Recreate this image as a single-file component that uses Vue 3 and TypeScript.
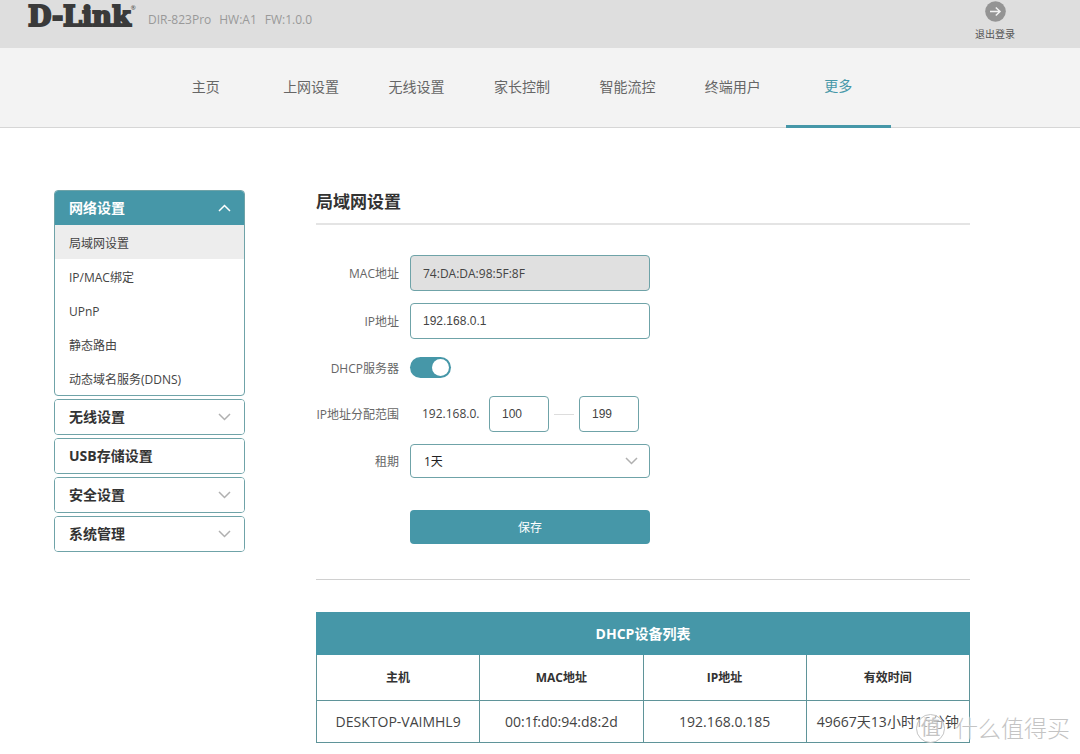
<script setup lang="ts">
import { ref } from 'vue'

interface MenuGroup {
  title: string
  arrow: boolean
}

interface Device {
  host: string
  mac: string
  ip: string
  lease: string
}

const tabs: string[] = ['主页', '上网设置', '无线设置', '家长控制', '智能流控', '终端用户', '更多']
const activeTab = ref('更多')

const subItems: string[] = ['局域网设置', 'IP/MAC绑定', 'UPnP', '静态路由', '动态域名服务(DDNS)']
const activeItem = ref('局域网设置')

const groups: MenuGroup[] = [
  { title: '无线设置', arrow: true },
  { title: 'USB存储设置', arrow: false },
  { title: '安全设置', arrow: true },
  { title: '系统管理', arrow: true },
]

const mac = ref('74:DA:DA:98:5F:8F')
const ip = ref('192.168.0.1')
const dhcp = ref(true)
const rangeStart = ref('100')
const rangeEnd = ref('199')
const lease = ref('1天')

const devices: Device[] = [
  { host: 'DESKTOP-VAIMHL9', mac: '00:1f:d0:94:d8:2d', ip: '192.168.0.185', lease: '49667天13小时15分钟' },
]
</script>

<template>
  <div class="page">
    <header class="topbar">
      <div class="brand">
        <span class="logo">D-Link</span><span class="reg">®</span>
      </div>
      <div class="info">
        <span>DIR-823Pro</span>
        <span>HW:A1</span>
        <span>FW:1.0.0</span>
      </div>
      <button class="logout" type="button">
        <svg width="21" height="21" viewBox="0 0 21 21" aria-hidden="true">
          <circle cx="10.500" cy="10.500" r="10.300" fill="#949494" />
          <path d="M5 10.500H15M10.800 6.500L15 10.500L10.800 14.500" fill="none" stroke="#f2f2f2" stroke-width="1.500" />
        </svg>
        <span>退出登录</span>
      </button>
    </header>

    <nav class="tabs">
      <a
        v-for="tab in tabs"
        :key="tab"
        href="#"
        :class="['tab', { active: tab === activeTab }]"
        @click.prevent="activeTab = tab"
      >{{ tab }}</a>
    </nav>

    <main class="main">
      <aside class="side">
        <section class="group">
          <button class="group-head open" type="button">
            <span>网络设置</span>
            <svg class="chevron" viewBox="0 0 13 8" aria-hidden="true"><path d="M1 7L6.500 1.500L12 7" /></svg>
          </button>
          <a
            v-for="item in subItems"
            :key="item"
            href="#"
            :class="['sub', { active: item === activeItem }]"
            @click.prevent="activeItem = item"
          >{{ item }}</a>
        </section>
        <section v-for="g in groups" :key="g.title" class="group">
          <button class="group-head" type="button">
            <span>{{ g.title }}</span>
            <svg v-if="g.arrow" class="chevron" viewBox="0 0 13 8" aria-hidden="true"><path d="M1 1L6.500 6.500L12 1" /></svg>
          </button>
        </section>
      </aside>

      <div class="content">
        <h1 class="title">局域网设置</h1>

        <form class="form" @submit.prevent>
          <div class="row">
            <label for="mac">MAC地址</label>
            <input id="mac" v-model="mac" class="field locked" type="text" readonly />
          </div>
          <div class="row">
            <label for="ip">IP地址</label>
            <input id="ip" v-model="ip" class="field" type="text" />
          </div>
          <div class="row toggle-row">
            <label for="dhcp">DHCP服务器</label>
            <input id="dhcp" v-model="dhcp" class="toggle" type="checkbox" />
          </div>
          <div class="row">
            <label for="start">IP地址分配范围</label>
            <div class="range">
              <span class="prefix">192.168.0.</span>
              <input id="start" v-model="rangeStart" class="field short" type="text" />
              <span class="dash"></span>
              <input v-model="rangeEnd" class="field short" type="text" aria-label="IP地址分配范围" />
            </div>
          </div>
          <div class="row">
            <label for="lease">租期</label>
            <div class="select">
              <select id="lease" v-model="lease">
                <option>1天</option>
              </select>
              <svg class="chevron" viewBox="0 0 13 8" aria-hidden="true"><path d="M1 1L6.500 6.500L12 1" /></svg>
            </div>
          </div>
          <div class="row save-row">
            <button class="save" type="submit">保存</button>
          </div>
        </form>

        <table class="devices">
          <thead>
            <tr class="caption">
              <th colspan="4">DHCP设备列表</th>
            </tr>
            <tr class="heads">
              <th>主机</th>
              <th>MAC地址</th>
              <th>IP地址</th>
              <th>有效时间</th>
            </tr>
          </thead>
          <tbody>
            <tr v-for="d in devices" :key="d.mac">
              <td>{{ d.host }}</td>
              <td>{{ d.mac }}</td>
              <td>{{ d.ip }}</td>
              <td>{{ d.lease }}</td>
            </tr>
          </tbody>
        </table>
      </div>
    </main>

    <div class="watermark">
      <span class="seal">值</span>
      <span>什么值得买</span>
    </div>
  </div>
</template>

<style>
body {
  background: #fff;
}
</style>

<style scoped>
.page {
  font-family: "Open Sans", "Noto Sans CJK SC", sans-serif;
  font-size: 12px;
  line-height: 18px;
  color: #444;
}

.page *,
.page *::before {
  box-sizing: border-box;
}

button,
input,
select {
  font: inherit;
  color: inherit;
  margin: 0;
}

a {
  color: inherit;
  text-decoration: none;
}

.topbar {
  display: flex;
  align-items: flex-start;
  height: 48px;
  padding: 0 65px 0 28px;
  background: #dedede;
}

.brand {
  display: flex;
  width: 120px;
  padding-top: 3px;
  color: #3a3a3a;
}

.logo {
  font-family: "DejaVu Serif", serif;
  font-size: 27px;
  font-weight: 700;
  line-height: 28px;
  -webkit-text-stroke: 2px #3a3a3a;
}

.reg {
  font-size: 6px;
  line-height: 10px;
}

.info {
  display: flex;
  flex: 1;
  gap: 8px;
  padding-top: 11px;
  color: #999;
}

.logout {
  display: flex;
  flex-direction: column;
  align-items: center;
  gap: 3px;
  padding: 1px 0 0;
  border: 0;
  background: none;
  font-size: 10px;
  color: #555;
}

.tabs {
  display: grid;
  grid-template-columns: repeat(7, 1fr);
  height: 80px;
  padding: 0 189px 0 153px;
  border-bottom: 1px solid #d6d6d6;
  background: #f3f3f3;
}

.tab {
  height: 80px;
  font-size: 14px;
  line-height: 78px;
  text-align: center;
  color: #666;
}

.tab.active {
  border-bottom: 3px solid #4697a8;
  line-height: 76px;
  color: #4697a8;
}

.main {
  display: grid;
  grid-template-columns: 191px 1fr;
  gap: 71px;
  padding: 62px 110px 11px 54px;
}

.side {
  display: flex;
  flex-direction: column;
  gap: 3px;
}

.group {
  overflow: hidden;
  border: 1px solid #6fa3a8;
  border-radius: 4px;
  background: #fff;
}

.group-head {
  display: flex;
  align-items: center;
  justify-content: space-between;
  width: 100%;
  height: 34px;
  padding: 0 13px 0 14px;
  border: 0;
  background: #fff;
  font-size: 14px;
  font-weight: 700;
  color: #333;
}

.group-head.open {
  background: #4697a8;
  color: #fff;
}

.chevron {
  width: 13px;
  height: 8px;
  fill: none;
  stroke: #b0b0b0;
  stroke-width: 1.500;
}

.open .chevron {
  stroke: #fff;
}

.sub {
  display: block;
  padding: 10px 14px 6px;
}

.sub.active {
  background: #ededed;
}

.title {
  margin: 0;
  padding-bottom: 10px;
  border-bottom: 2px solid #e4e4e4;
  font-size: 17px;
  font-weight: 700;
  line-height: 23px;
  color: #333;
}

.form {
  display: flex;
  flex-direction: column;
  gap: 12px;
  padding: 30px 0 35px;
  border-bottom: 1px solid #d0d0d0;
}

.row {
  display: grid;
  grid-template-columns: 83px 240px;
  gap: 11px;
  align-items: center;
}

.row label {
  padding-top: 2px;
  text-align: right;
  white-space: nowrap;
  color: #666;
}

.field {
  width: 100%;
  height: 36px;
  padding: 0 12px;
  border: 1px solid #6fa3a8;
  border-radius: 4px;
  background: #fff;
  font-family: "Liberation Sans", Arial, sans-serif;
}

.locked {
  background: #e0e0e0;
  font-family: inherit;
}

.toggle-row {
  height: 33px;
}

.toggle {
  appearance: none;
  width: 41px;
  height: 21px;
  padding: 2px;
  border-radius: 11px;
  background: #aaa;
}

.toggle::before {
  content: "";
  display: block;
  width: 17px;
  height: 17px;
  border-radius: 50%;
  background: #fff;
}

.toggle:checked {
  background: #4697a8;
}

.toggle:checked::before {
  margin-left: auto;
}

.range {
  display: flex;
  align-items: center;
}

.prefix {
  width: 79px;
  padding-left: 12px;
}

.short {
  width: 60px;
}

.dash {
  width: 20px;
  height: 1px;
  margin: 0 5px;
  background: #ddd;
}

.select {
  position: relative;
}

.select select {
  display: block;
  appearance: none;
  width: 100%;
  height: 34px;
  padding: 2px 13px 0;
  border: 1px solid #6fa3a8;
  border-radius: 4px;
  background: #fff;
  color: #222;
}

.select .chevron {
  position: absolute;
  top: 13px;
  right: 12px;
  pointer-events: none;
}

.save-row {
  padding-top: 20px;
}

.save {
  grid-column: 2;
  height: 34px;
  padding: 2px 0 0;
  border: 0;
  border-radius: 4px;
  background: #4697a8;
  color: #fff;
}

.devices {
  width: 100%;
  margin-top: 32px;
  border-collapse: collapse;
  table-layout: fixed;
  text-align: center;
}

.devices th,
.devices td {
  padding: 0;
  border: 1px solid #5f9499;
  white-space: nowrap;
}

.devices .caption th {
  height: 42px;
  border-color: #4697a8;
  background: #4697a8;
  font-size: 14px;
  color: #fff;
}

.devices .heads th {
  height: 46px;
  border-top-color: #4697a8;
  color: #333;
}

.devices td {
  height: 42px;
  font-size: 14px;
}

.watermark {
  position: absolute;
  right: 10px;
  top: 713px;
  display: flex;
  align-items: center;
  gap: 10px;
  font-size: 23px;
  font-weight: 300;
  line-height: 30px;
  color: #c4c4c4;
  text-shadow: -1px -1px 1px #fff;
  pointer-events: none;
}

.seal {
  width: 29px;
  height: 29px;
  border: 1px solid #c4c4c4;
  border-radius: 50%;
  background: rgba(255, 255, 255, 0.5);
  font-size: 20px;
  font-weight: 400;
  line-height: 26px;
  text-align: center;
}
</style>
